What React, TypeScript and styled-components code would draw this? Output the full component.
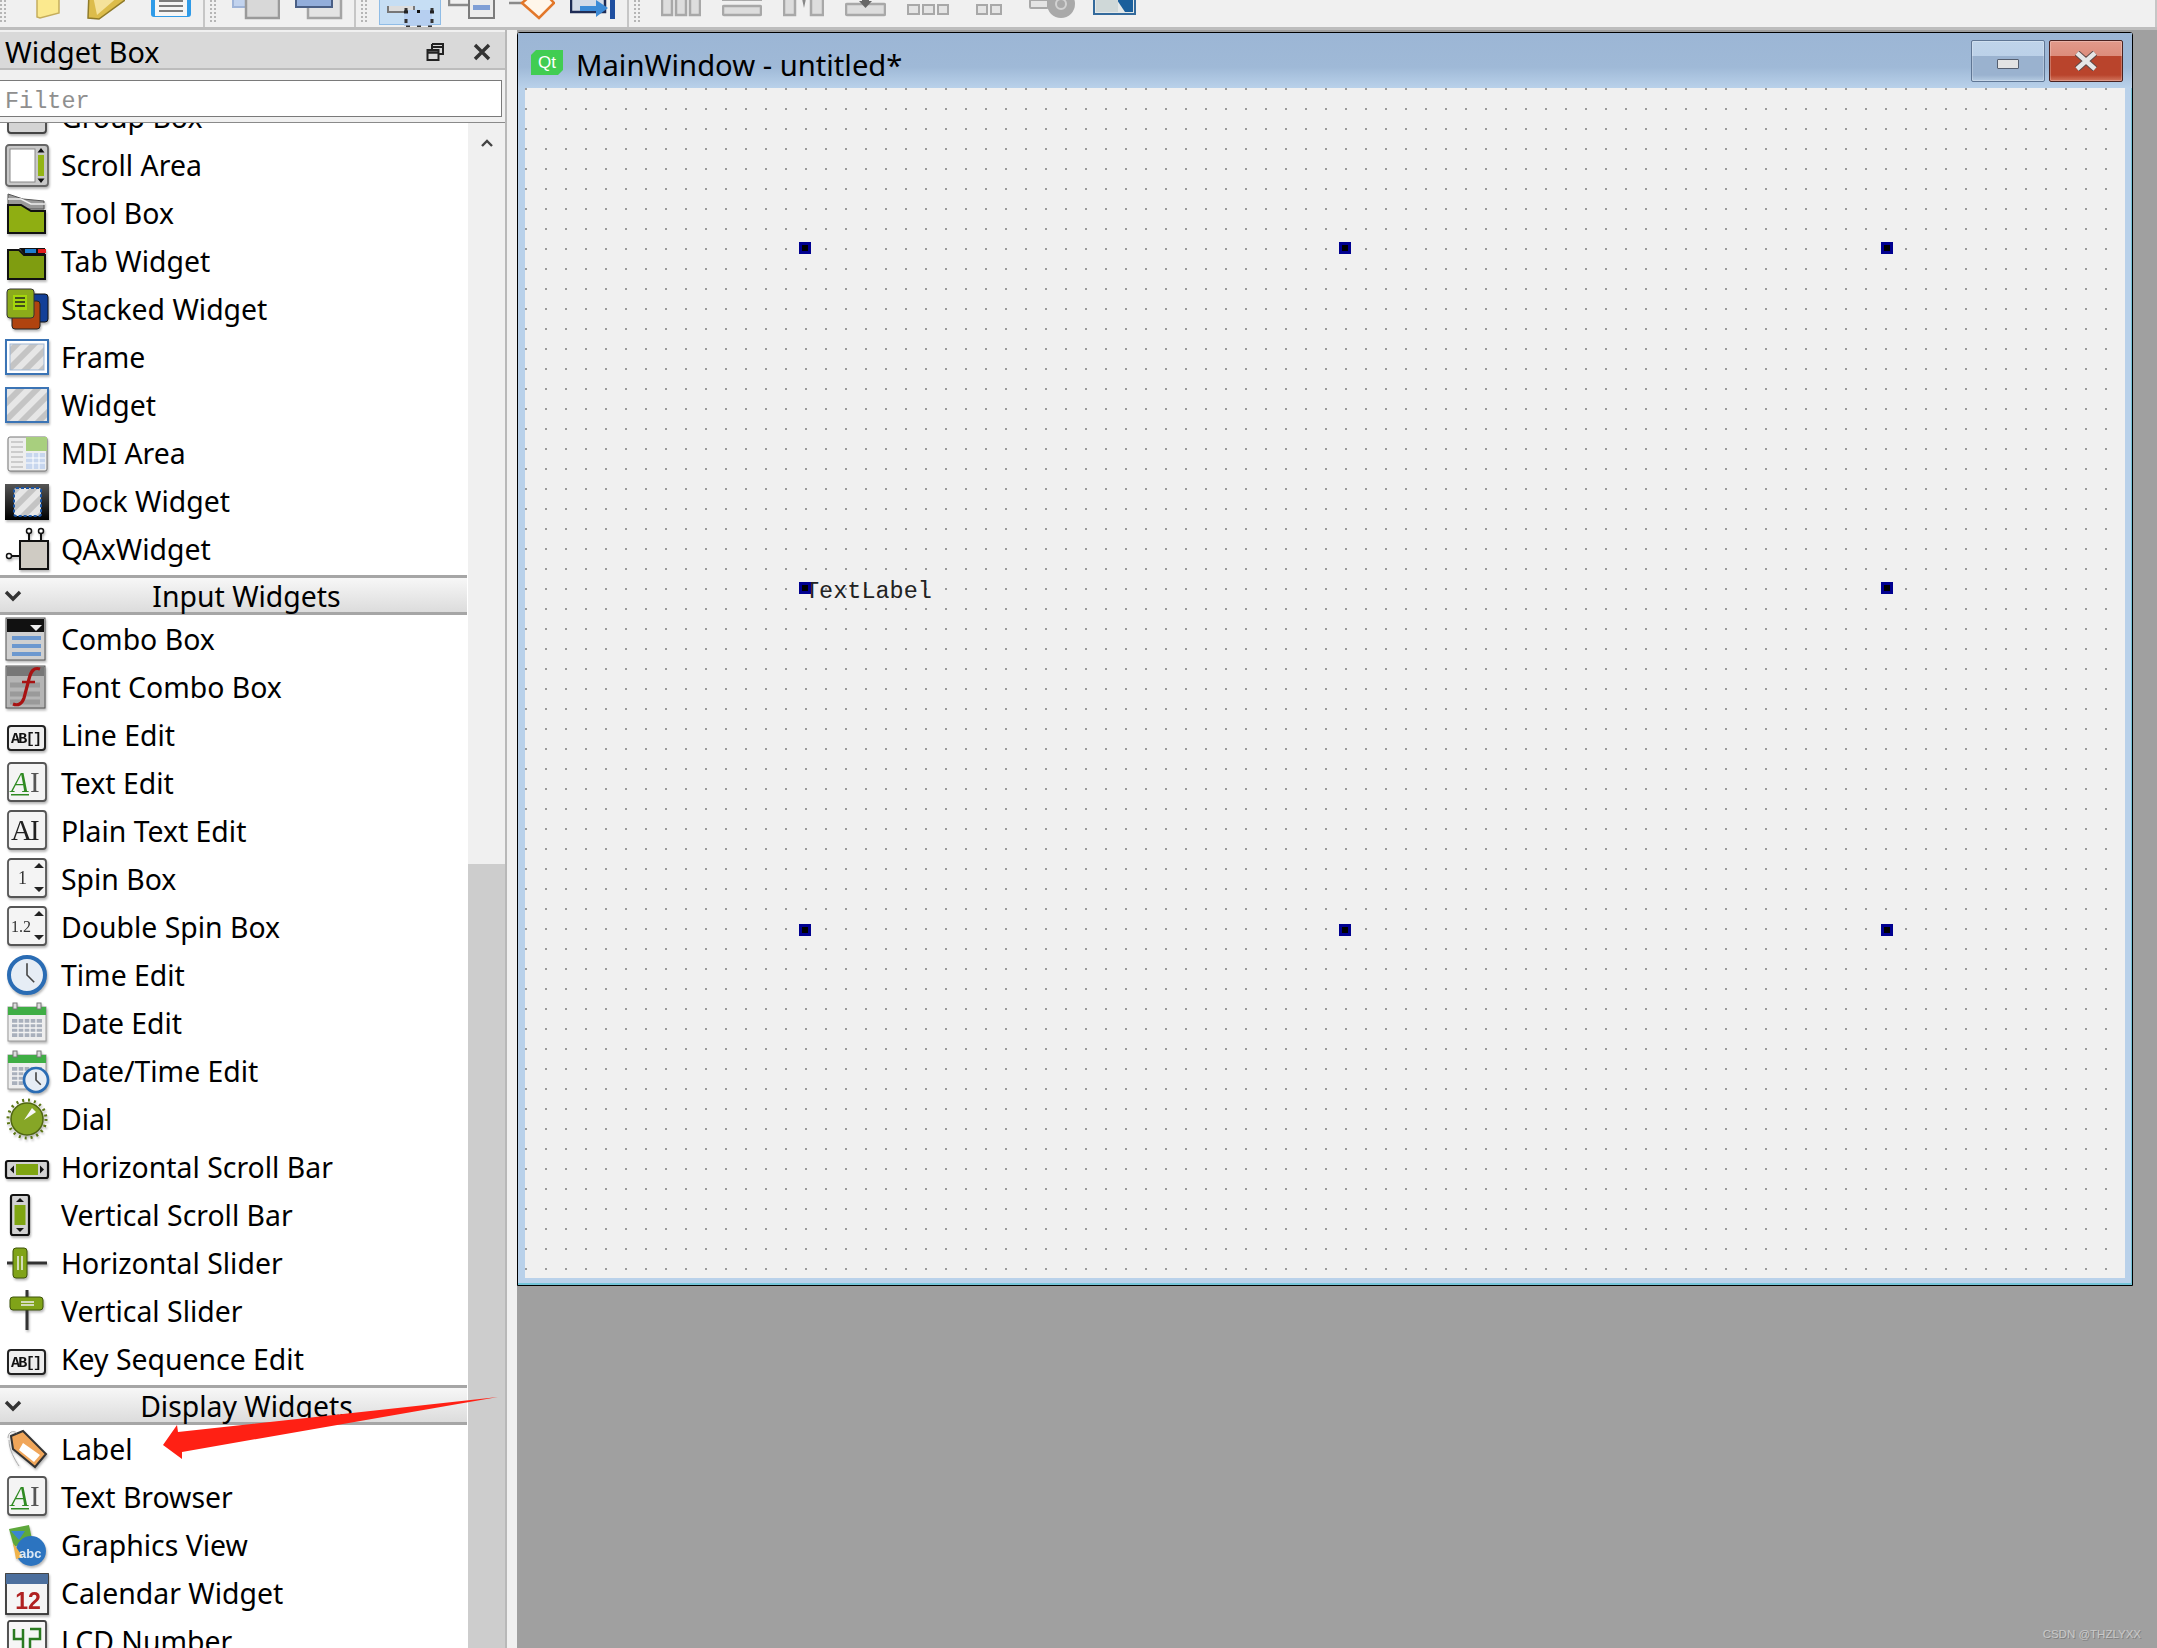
import React from 'react'
import styled, { createGlobalStyle } from 'styled-components'

const GlobalStyle = createGlobalStyle`
	html, body {
		margin: 0;
		padding: 0;
		background: #f0f0f0;
	}
	* {
		box-sizing: border-box;
	}
`

const Page = styled.div`
	position: relative;
	width: 2157px;
	height: 1648px;
	overflow: hidden;
	display: flex;
	flex-direction: column;
	background: #f0f0f0;
	color: #000;
	font-family: 'Noto Sans', 'Open Sans', sans-serif;
	font-size: 28.4px;
`

const Toolbar = styled.div`
	flex: none;
	height: 30px;
	display: flex;
	background: #f0f0f0;
	border-bottom: 3px solid #bdbdbd;
	overflow: hidden;
`

const ToolGroup = styled.div<{ $width: number }>`
	flex: none;
	width: ${({ $width }) => $width}px;
	height: 27px;
	display: flex;
	align-items: flex-start;
	border-right: 2px solid #c6c6c6;
`

const Grip = styled.span<{ $ml?: number }>`
	flex: none;
	width: 7px;
	height: 24px;
	margin-left: ${({ $ml }) => $ml ?? 0}px;
	background-image: conic-gradient(at 2px 2px, #0000 75%, #b5b5b5 0);
	background-size: 4px 4px;
`

const ToolSvg = styled.svg<{ $ml: number }>`
	flex: none;
	display: block;
	margin-left: ${({ $ml }) => $ml}px;
`

const ToolActive = styled.span<{ $ml: number }>`
	flex: none;
	display: block;
	width: 62px;
	height: 25px;
	margin-left: ${({ $ml }) => $ml}px;
	background: #c6def4;
	border: 1px solid #8fbce6;
	border-top: none;
`

const Body = styled.div`
	flex: 1;
	min-height: 0;
	display: flex;
`

const Dock = styled.aside`
	flex: none;
	width: 505px;
	display: flex;
	flex-direction: column;
	padding-top: 2px;
`

const DockTitle = styled.header`
	flex: none;
	height: 38px;
	display: flex;
	align-items: center;
	padding: 4px 14px 0 5px;
	background: #d9d9d9;
	border-bottom: 2px solid #bcbcbc;
	line-height: 1;
`

const DockName = styled.span`
	flex: 1;
	font-size: 28.8px;
`

const DockButton = styled.svg<{ $ml?: number }>`
	flex: none;
	margin-left: ${({ $ml }) => $ml ?? 0}px;
`

const FilterRow = styled.div`
	flex: none;
	padding: 10px 3px 5px 0;
`

const FilterInput = styled.input`
	display: block;
	width: 100%;
	height: 37px;
	padding: 5px 0 0 5px;
	background: #fff;
	border: 1px solid #7a7a7a;
	border-left: none;
	outline: none;
	font-family: 'Liberation Mono', monospace;
	font-size: 23.5px;
	&::placeholder {
		color: #8f8f8f;
		opacity: 1;
	}
`

const ListFrame = styled.div`
	flex: 1;
	min-height: 0;
	display: flex;
	overflow: hidden;
	border-top: 1px solid #8a8a8a;
`

const ListBody = styled.div`
	flex: none;
	width: 468px;
	height: 100%;
	overflow: hidden;
	background: #fff;
`

const ListContent = styled.div`
	margin-top: -30px;
`

const Row = styled.div`
	height: 48px;
	display: flex;
	align-items: center;
	padding-left: 5px;
	white-space: nowrap;
`

const RowIcon = styled.svg`
	flex: none;
	display: block;
	margin-right: 12px;
	overflow: visible;
	filter: drop-shadow(1px 2px 1px rgba(0, 0, 0, 0.28));
`

const Category = styled.div<{ $mt: number }>`
	height: 40px;
	margin: ${({ $mt }) => $mt}px 1px 0 0;
	padding-top: 2px;
	display: flex;
	align-items: center;
	background: linear-gradient(#f7f7f7, #dcdcdc);
	border-top: 3px solid #a6a6a6;
	border-bottom: 3px solid #a6a6a6;
`

const CategoryArrow = styled.svg`
	flex: none;
	width: 26px;
	padding-left: 4px;
`

const CategoryName = styled.span`
	flex: 1;
	text-align: center;
`

const Scrollbar = styled.div`
	flex: none;
	width: 37px;
	display: flex;
	flex-direction: column;
	background: #f0f0f0;
`

const ScrollArrow = styled.svg`
	flex: none;
	display: block;
	margin: 16px auto 0;
`

const ScrollThumb = styled.div`
	margin-top: auto;
	height: 784px;
	background: #cdcdcd;
`

const Splitter = styled.div`
	flex: none;
	width: 12px;
	background: #f0f0f0;
	border-left: 2px solid #b8b8b8;
`

const MdiArea = styled.main`
	flex: 1;
	min-width: 0;
	padding: 2px 0 0;
	background: #a0a0a0;
`

const SubWindow = styled.section`
	width: 1616px;
	height: 1254px;
	display: flex;
	flex-direction: column;
	background: #b9d1ea;
	border: 1px solid #000;
	border-radius: 3px 3px 0 0;
	box-shadow: inset -1px -2px 0 #74c4d8;
`

const TitleBar = styled.header`
	flex: none;
	height: 55px;
	display: flex;
	align-items: flex-start;
	padding: 7px 9px 0 13px;
	background: linear-gradient(#9cb6d5 0%, #9fb9d7 62%, #b9d1ea 100%);
`

const QtLogo = styled.svg`
	flex: none;
	margin-top: 10px;
`

const TitleText = styled.span`
	flex: 1;
	margin-left: 13px;
	font-size: 29.2px;
	line-height: 40px;
	padding-top: 5px;
`

const WindowButton = styled.span<{ $close?: boolean }>`
	flex: none;
	width: 74px;
	height: 42px;
	margin-left: 4px;
	display: grid;
	place-items: center;
	border-radius: 2px;
	border: 1px solid ${({ $close }) => ($close ? '#4a2220' : '#5f7694')};
	box-shadow: inset 0 0 0 1px rgba(255, 255, 255, 0.25);
	background: ${({ $close }) =>
		$close
			? 'linear-gradient(#e29a8b 0, #dc8c7b 38%, #b9442c 38%, #b9442c 85%, #d2765f 100%)'
			: 'linear-gradient(#bfd4ea 0, #bcd1e8 38%, #9ab2cf 38%, #9ab2cf 85%, #b6cce3 100%)'};
`

const MinGlyph = styled.span`
	display: block;
	width: 22px;
	height: 10px;
	margin-top: 6px;
	background: #e3e3e3;
	border: 1px solid #555f70;
	border-radius: 1px;
`

const FormCanvas = styled.div`
	position: relative;
	flex: none;
	width: 1600px;
	height: 1190px;
	margin-left: 7px;
	background-color: #f0f0f0;
	background-image: conic-gradient(at 2px 2px, #0000 75%, #9b9b9b 0);
	background-size: 20px 20px;
`

const TextLabel = styled.span`
	position: absolute;
	left: 280px;
	top: 490px;
	font-family: 'Liberation Mono', monospace;
	font-size: 23.5px;
	line-height: 28px;
	color: #222;
`

const Handle = styled.span<{ $x: number; $y: number }>`
	position: absolute;
	left: ${({ $x }) => $x}px;
	top: ${({ $y }) => $y}px;
	width: 12px;
	height: 12px;
	background: #000;
	border: 3px solid #000090;
`

const Watermark = styled.span`
	position: absolute;
	right: 16px;
	bottom: 8px;
	font-family: 'Liberation Sans', sans-serif;
	font-size: 11.5px;
	color: #c9c9c9;
	text-shadow: 1px 1px 0 #808080;
`

const ArrowMark = styled.svg`
	position: absolute;
	left: 0;
	top: 0;
	pointer-events: none;
`

const handles = [
	[274, 154],
	[814, 154],
	[1356, 154],
	[274, 494],
	[1356, 494],
	[274, 836],
	[814, 836],
	[1356, 836],
]

// small widget box pictures, all on a 44x44 box
const Hatch = ({ id }: { id: string }) => (
	<pattern id={id} width="12" height="12" patternUnits="userSpaceOnUse" patternTransform="rotate(45)">
		<rect width="12" height="12" fill="#e6e6e6" />
		<rect width="6" height="12" fill="#c4c4c4" />
	</pattern>
)

const AiIcon = ({ color }: { color: string }) => (
	<>
		<rect x="3" y="2" width="38" height="38" rx="3" fill="#f4f4f4" stroke="#555" strokeWidth="1.8" />
		<text x="6" y="31" fontFamily="Liberation Serif" fontStyle={color === '#222' ? 'normal' : 'italic'} fontSize="29" fill={color}>
			A
		</text>
		<text x="25" y="31" fontFamily="Liberation Serif" fontSize="29" fill={color === '#222' ? '#222' : '#555'}>
			I
		</text>
		{color !== '#222' && <rect x="6" y="33" width="18" height="1.5" fill={color} />}
	</>
)

const AbIcon = () => (
	<>
		<rect x="3" y="13" width="37" height="24" rx="3" fill="#eee" stroke="#222" strokeWidth="2" />
		<text x="6" y="30" fontFamily="Liberation Mono" fontWeight="700" fontSize="15" fill="#111" textLength="31">
			AB[]
		</text>
	</>
)

const SpinIcon = ({ label }: { label: string }) => (
	<>
		<rect x="3" y="2" width="38" height="38" rx="3" fill="#f4f4f4" stroke="#555" strokeWidth="1.8" />
		<text x={label.length > 1 ? 6 : 13} y="27" fontFamily="Liberation Serif" fontSize={label.length > 1 ? 16 : 18} fill="#333">
			{label}
		</text>
		<path d="M29 11l5-5 5 5zM29 30h10l-5 5z" fill="#222" />
	</>
)

const Clock = ({ cx, cy, r }: { cx: number; cy: number; r: number }) => (
	<>
		<circle cx={cx} cy={cy} r={r} fill="#e6edf5" stroke="#2a6cb4" strokeWidth={r / 4.5} />
		<path d={`M${cx} ${cy - r * 0.65}V${cy}L${cx + r * 0.4} ${cy + r * 0.4}`} fill="none" stroke="#444" strokeWidth="1.6" />
	</>
)

const CalendarBase = () => (
	<>
		<rect x="3" y="6" width="38" height="34" fill="#eee" stroke="#999" />
		<rect x="3" y="6" width="38" height="8" fill="#3fae45" />
		<rect x="8" y="2" width="4" height="6" fill="#ddd" stroke="#777" />
		<rect x="32" y="2" width="4" height="6" fill="#ddd" stroke="#777" />
		<path d="M7 18h30v18H7z" fill="#a9b0bc" />
		<path d="M7 22.5h30M7 27h30M7 31.5h30M13 18v18M19 18v18M25 18v18M31 18v18" stroke="#f3f3f3" strokeWidth="1.3" />
	</>
)

const icons: Record<string, React.ReactNode> = {
	'Group Box': <rect x="3" y="8" width="38" height="30" rx="3" fill="#d4d4d4" stroke="#444" strokeWidth="1.8" />,
	'Scroll Area': (
		<>
			<rect x="1" y="2" width="42" height="41" rx="3" fill="#c8c8c8" stroke="#666" strokeWidth="1.8" />
			<rect x="5" y="6" width="25" height="33" fill="#fff" stroke="#888" />
			<rect x="33" y="12" width="6" height="21" fill="#93b414" />
			<path d="M36 5l3.5 4.5h-7zM36 40l3.5-4.5h-7z" fill="#111" />
		</>
	),
	'Tool Box': (
		<>
			<path d="M3 3l15 5 21 2v8H3z" fill="#9a9a9a" stroke="#555" />
			<path d="M3 8h13l10 5h14" stroke="#eee" fill="none" strokeWidth="1.5" />
			<path d="M3 14h13l10 6h14v22H3z" fill="#8fae12" stroke="#111" strokeWidth="2" />
		</>
	),
	'Tab Widget': (
		<>
			<path d="M3 11h11l5 5h21v24H3z" fill="#7f9d10" stroke="#111" strokeWidth="2" />
			<path d="M14 9h26v6H19z" fill="#111" />
			<rect x="20" y="10" width="11" height="4" fill="#1f7fd0" />
			<rect x="33" y="10" width="8" height="4" fill="#e21d1d" />
		</>
	),
	'Stacked Widget': (
		<>
			<rect x="20" y="7" width="23" height="28" rx="3" fill="#123f98" stroke="#111" />
			<rect x="7" y="14" width="28" height="28" rx="3" fill="#b0430f" stroke="#222" />
			<rect x="2" y="2" width="27" height="29" rx="3" fill="#8cab1a" stroke="#333" />
			<rect x="8" y="8" width="14" height="15" fill="#a4d60c" />
			<path d="M10 11h10M10 15h10M10 19h10" stroke="#222" strokeWidth="1.5" />
		</>
	),
	Frame: (
		<>
			<defs>
				<Hatch id="hatch-frame" />
			</defs>
			<rect x="1" y="5" width="42" height="34" fill="#fff" stroke="#3b74b5" strokeWidth="2" />
			<rect x="5" y="9" width="34" height="26" fill="url(#hatch-frame)" stroke="#9fb8d6" />
		</>
	),
	Widget: (
		<>
			<defs>
				<Hatch id="hatch-widget" />
			</defs>
			<rect x="1" y="5" width="42" height="34" fill="url(#hatch-widget)" stroke="#3b74b5" strokeWidth="2" />
		</>
	),
	'MDI Area': (
		<>
			<rect x="3" y="6" width="39" height="34" rx="2" fill="#eee" stroke="#777" />
			<rect x="21" y="6" width="21" height="14" fill="#a8cf7e" />
			<path d="M6 11h12M6 16h12M6 21h12M6 26h12M6 31h12M6 36h12" stroke="#aaa" />
			<rect x="21" y="22" width="19" height="16" fill="#c7d6ee" />
			<path d="M21 27h19M21 32h19M28 22v16M34 22v16" stroke="#fff" />
		</>
	),
	'Dock Widget': (
		<>
			<defs>
				<Hatch id="hatch-dock" />
				<linearGradient id="dock-fade" x1="0" y1="0" x2="0" y2="1">
					<stop offset="0" stopColor="#555" />
					<stop offset="1" stopColor="#000" />
				</linearGradient>
			</defs>
			<rect x="0" y="5" width="44" height="36" fill="url(#dock-fade)" />
			<rect x="9" y="9" width="27" height="28" rx="2" fill="url(#hatch-dock)" stroke="#1e57a4" strokeWidth="2" strokeDasharray="3 2" />
		</>
	),
	QAxWidget: (
		<>
			<rect x="15" y="14" width="28" height="28" fill="#cfcbc3" stroke="#111" strokeWidth="2" />
			<path d="M1 29h14M24 5v9M36 5v9" stroke="#111" strokeWidth="2" />
			<circle cx="24" cy="4" r="2.5" fill="#fff" stroke="#111" strokeWidth="1.5" />
			<circle cx="36" cy="4" r="2.5" fill="#fff" stroke="#111" strokeWidth="1.5" />
			<circle cx="4" cy="29" r="2.5" fill="#fff" stroke="#111" strokeWidth="1.5" />
		</>
	),
	'Combo Box': (
		<>
			<rect x="1" y="1" width="39" height="42" fill="#d0d0d0" stroke="#555" />
			<rect x="2" y="2" width="37" height="13" fill="#111" />
			<path d="M25 8h12l-6 6z" fill="#eee" />
			<path d="M7 21h29M7 29h29M7 37h29" stroke="#6c98cf" strokeWidth="4" />
		</>
	),
	'Font Combo Box': (
		<>
			<rect x="1" y="1" width="39" height="42" fill="#b5b5b5" stroke="#555" />
			<rect x="2" y="2" width="37" height="9" fill="#777" />
			<path d="M5 20h30M5 29h30M5 37h30" stroke="#9a9a9a" strokeWidth="5" />
			<path d="M35 4c-6-2-9 2-11 10l-5 19c-2 6-6 8-11 6" fill="none" stroke="#a81212" strokeWidth="3.2" />
			<path d="M17 17h13" stroke="#a81212" strokeWidth="2.5" />
		</>
	),
	'Line Edit': <AbIcon />,
	'Text Edit': <AiIcon color="#2f8a22" />,
	'Plain Text Edit': <AiIcon color="#222" />,
	'Spin Box': <SpinIcon label="1" />,
	'Double Spin Box': <SpinIcon label="1.2" />,
	'Time Edit': <Clock cx={22} cy={22} r={18} />,
	'Date Edit': <CalendarBase />,
	'Date/Time Edit': (
		<>
			<CalendarBase />
			<Clock cx={31} cy={31} r={12} />
		</>
	),
	Dial: (
		<>
			<circle cx="22" cy="22" r="19" fill="none" stroke="#5c7614" strokeWidth="3" strokeDasharray="2 4" />
			<circle cx="22" cy="22" r="16" fill="#86a626" stroke="#4f6610" strokeWidth="1.5" />
			<path d="M27 11l4 4-12 8z" fill="#f7f7f7" />
		</>
	),
	'Horizontal Scroll Bar': (
		<>
			<rect x="1" y="16" width="42" height="17" rx="2" fill="#d2d2d2" stroke="#111" strokeWidth="2.2" />
			<rect x="11" y="19" width="22" height="11" fill="#7fa512" />
			<path d="M5 24.5l4-4v8zM39 24.5l-4-4v8z" fill="#111" />
		</>
	),
	'Vertical Scroll Bar': (
		<>
			<rect x="6" y="2" width="18" height="40" rx="2" fill="#d2d2d2" stroke="#111" strokeWidth="2.2" />
			<rect x="9.5" y="12" width="11" height="20" fill="#7fa512" />
			<path d="M15 5l4 4h-8zM15 39l4-4h-8z" fill="#111" />
		</>
	),
	'Horizontal Slider': (
		<>
			<path d="M2 22h40" stroke="#333" strokeWidth="3" />
			<rect x="8" y="7" width="14" height="30" rx="3" fill="#80a318" stroke="#3f540a" />
			<path d="M13 15v14M17 15v14" stroke="#eee" strokeWidth="1.5" />
		</>
	),
	'Vertical Slider': (
		<>
			<path d="M22 1v40" stroke="#333" strokeWidth="3" />
			<rect x="5" y="8" width="33" height="13" rx="3" fill="#80a318" stroke="#3f540a" />
			<path d="M16 13h13M16 16h13" stroke="#eee" strokeWidth="1.5" />
		</>
	),
	'Key Sequence Edit': <AbIcon />,
	Label: (
		<>
			<path d="M6 9l12-5 23 23-11 13L8 22z" fill="#f0a65a" stroke="#333" strokeWidth="2" />
			<path d="M18 16l17 12-6 7-15-12z" fill="#fff" />
			<path d="M3 11C3 5 8 3 12 6M4 13c0 10 6 20 10 26" fill="none" stroke="#aaa" />
		</>
	),
	'Text Browser': <AiIcon color="#2f8a22" />,
	'Graphics View': (
		<>
			<path d="M4 6l20-4 3 14-18 8z" fill="#5ea83c" />
			<path d="M6 8h14l-6 9z" fill="#3a86d0" />
			<circle cx="26" cy="28" r="15" fill="#2c74c0" />
			<path d="M8 20l10 14-7 2z" fill="#f0b34a" />
			<text x="14" y="35" fontFamily="Liberation Sans" fontSize="13" fontWeight="700" fill="#dbe8f5">
				abc
			</text>
		</>
	),
	'Calendar Widget': (
		<>
			<rect x="1" y="3" width="42" height="40" fill="#f5f5f5" stroke="#333" strokeWidth="1.8" />
			<rect x="1" y="3" width="42" height="10" fill="#4c6f9d" />
			<text x="23" y="38" textAnchor="middle" fontFamily="Liberation Sans" fontWeight="700" fontSize="23" fill="#b02020">
				12
			</text>
		</>
	),
	'LCD Number': (
		<>
			<rect x="3" y="2" width="38" height="38" rx="2" fill="#f6f6f6" stroke="#444" strokeWidth="1.8" />
			<path d="M9 10v10h9M18 10v22M25 10h10v10H25v12h10" fill="none" stroke="#2a7a20" strokeWidth="2.5" />
		</>
	),
}

const containers = [
	'Group Box',
	'Scroll Area',
	'Tool Box',
	'Tab Widget',
	'Stacked Widget',
	'Frame',
	'Widget',
	'MDI Area',
	'Dock Widget',
	'QAxWidget',
]
const inputs = [
	'Combo Box',
	'Font Combo Box',
	'Line Edit',
	'Text Edit',
	'Plain Text Edit',
	'Spin Box',
	'Double Spin Box',
	'Time Edit',
	'Date Edit',
	'Date/Time Edit',
	'Dial',
	'Horizontal Scroll Bar',
	'Vertical Scroll Bar',
	'Horizontal Slider',
	'Vertical Slider',
	'Key Sequence Edit',
]
const displays = ['Label', 'Text Browser', 'Graphics View', 'Calendar Widget', 'LCD Number']

const Items = ({ names }: { names: string[] }) => (
	<>
		{names.map((name) => (
			<Row key={name}>
				<RowIcon width="44" height="44" viewBox="0 0 44 44">
					{icons[name]}
				</RowIcon>
				{name}
			</Row>
		))}
	</>
)

const Chevron = () => (
	<CategoryArrow height="14" viewBox="0 0 22 14">
		<path d="M2 3l7 7 7-7" fill="none" stroke="#333" strokeWidth="3.4" />
	</CategoryArrow>
)

const ToolIcon = ({ w, ml, children }: { w: number; ml: number; children: React.ReactNode }) => (
	<ToolSvg $ml={ml} width={w} height="26" viewBox={`0 0 ${w} 26`}>
		{children}
	</ToolSvg>
)

export default function App() {
	return (
		<Page>
			<GlobalStyle />
			<Toolbar>
				<ToolGroup $width={205}>
					<Grip />
					<ToolIcon w={24} ml={29}>
						<path d="M1 -8H23V13L4 18 1 17z" fill="#fbe98e" stroke="#c5ad5c" strokeWidth="1.5" />
					</ToolIcon>
					<ToolIcon w={40} ml={25}>
						<path d="M4 -8H40V0L14 19 3 18z" fill="#dcbc4a" stroke="#8f7a28" strokeWidth="1.5" />
						<path d="M8 -4H34L12 15z" fill="#f5e29a" />
					</ToolIcon>
					<ToolIcon w={42} ml={25}>
						<rect x="1" y="-10" width="40" height="27" rx="3" fill="#2f9be8" />
						<rect x="5" y="-10" width="32" height="26" fill="#f6f6f6" />
						<path d="M9 1h24M9 6h24M9 11h24" stroke="#555" strokeWidth="1.5" />
					</ToolIcon>
				</ToolGroup>
				<ToolGroup $width={151}>
					<Grip $ml={5} />
					<ToolIcon w={48} ml={15}>
						<rect x="1" y="-12" width="20" height="19" fill="#c2d3ee" stroke="#9fb4d8" strokeWidth="2" />
						<rect x="14" y="-12" width="33" height="30" fill="#d8d8d8" stroke="#9a9a9a" strokeWidth="2.5" />
					</ToolIcon>
					<ToolIcon w={48} ml={15}>
						<rect x="13" y="-12" width="33" height="30" fill="#e4e4e4" stroke="#a4a4a4" strokeWidth="2.5" />
						<rect x="1" y="-12" width="36" height="19" fill="#93aedb" stroke="#4a5f85" strokeWidth="2" />
					</ToolIcon>
				</ToolGroup>
				<ToolGroup $width={273}>
					<Grip $ml={5} />
					<ToolActive $ml={11}>
						<svg width="60" height="24" viewBox="0 0 60 24">
							<rect x="8" y="-12" width="26" height="18" fill="#ddd" stroke="#777" strokeWidth="2" />
							<rect x="24" y="4" width="28" height="16" fill="#b6cff0" />
							<path d="M26 2v20M52 2v20M26 21h26" stroke="#333" strokeWidth="3" strokeDasharray="4 7" />
							<rect x="37" y="4" width="3" height="3" fill="#111" />
							<path d="M24 6h4M50 6h4" stroke="#222" strokeWidth="3" />
						</svg>
					</ToolActive>
					<ToolIcon w={47} ml={7}>
						<path d="M1 -4V5H20" fill="none" stroke="#8a8a8a" strokeWidth="2.5" />
						<rect x="21" y="-6" width="25" height="24" fill="#ececec" stroke="#7c7c7c" strokeWidth="2" />
						<rect x="25" y="5" width="17" height="5" fill="#7f9fd6" />
					</ToolIcon>
					<ToolIcon w={47} ml={13}>
						<path d="M1 3H14" stroke="#8a8a8a" strokeWidth="2.5" />
						<path d="M14 3L27 -8H36L46 3 31 18z" fill="#fff6ea" stroke="#e2772a" strokeWidth="2.5" />
					</ToolIcon>
					<ToolIcon w={47} ml={15}>
						<rect x="1" y="-8" width="34" height="20" fill="#d4dbe8" stroke="#1f2c55" strokeWidth="2.5" />
						<path d="M10 6H26V0L38 8 26 17V11H10z" fill="#3c8ad6" />
						<rect x="40" y="-8" width="5" height="27" fill="#1f4fa0" />
					</ToolIcon>
				</ToolGroup>
				<ToolGroup $width={1528}>
					<Grip $ml={5} />
					<ToolIcon w={40} ml={20}>
						<rect x="1" y="-10" width="10" height="25" fill="#ddd" stroke="#a8a8a8" strokeWidth="2.5" />
						<rect x="15" y="-10" width="10" height="25" fill="#ddd" stroke="#a8a8a8" strokeWidth="2.5" />
						<rect x="29" y="-10" width="10" height="25" fill="#ddd" stroke="#a8a8a8" strokeWidth="2.5" />
					</ToolIcon>
					<ToolIcon w={40} ml={21}>
						<rect x="1" y="-8" width="38" height="8" fill="#ddd" stroke="#a8a8a8" strokeWidth="2" />
						<rect x="1" y="6" width="38" height="9" rx="1" fill="#ddd" stroke="#a8a8a8" strokeWidth="2.5" />
					</ToolIcon>
					<ToolIcon w={41} ml={21}>
						<rect x="1" y="-10" width="11" height="25" fill="#ddd" stroke="#a8a8a8" strokeWidth="2.5" />
						<path d="M18 -6L21 8 24 -6z" fill="#888" />
						<rect x="28" y="-10" width="12" height="25" fill="#ddd" stroke="#a8a8a8" strokeWidth="2.5" />
					</ToolIcon>
					<ToolIcon w={41} ml={21}>
						<rect x="1" y="4" width="39" height="11" rx="1" fill="#ddd" stroke="#a8a8a8" strokeWidth="2.5" />
						<path d="M14 1h13L20.5 8z" fill="#666" />
						<rect x="17" y="-8" width="7" height="9" fill="#666" />
					</ToolIcon>
					<ToolIcon w={42} ml={21}>
						<rect x="1" y="-8" width="11" height="6" fill="#ddd" stroke="#a8a8a8" strokeWidth="1.5" />
						<rect x="16" y="-8" width="11" height="6" fill="#ddd" stroke="#a8a8a8" strokeWidth="1.5" />
						<rect x="31" y="-8" width="10" height="6" fill="#ddd" stroke="#a8a8a8" strokeWidth="1.5" />
						<rect x="1" y="5" width="11" height="9" fill="#e4e4e4" stroke="#a8a8a8" strokeWidth="2" />
						<rect x="16" y="5" width="11" height="9" fill="#e4e4e4" stroke="#a8a8a8" strokeWidth="2" />
						<rect x="31" y="5" width="10" height="9" fill="#e4e4e4" stroke="#a8a8a8" strokeWidth="2" />
					</ToolIcon>
					<ToolIcon w={26} ml={27}>
						<rect x="1" y="-8" width="10" height="6" fill="#ddd" stroke="#a8a8a8" strokeWidth="1.5" />
						<rect x="15" y="-8" width="10" height="6" fill="#ddd" stroke="#a8a8a8" strokeWidth="1.5" />
						<rect x="1" y="5" width="10" height="9" fill="#e4e4e4" stroke="#a8a8a8" strokeWidth="2" />
						<rect x="15" y="5" width="10" height="9" fill="#e4e4e4" stroke="#a8a8a8" strokeWidth="2" />
					</ToolIcon>
					<ToolIcon w={46} ml={27}>
						<rect x="1" y="0" width="18" height="8" rx="1" fill="#e4e4e4" stroke="#a8a8a8" strokeWidth="2" />
						<circle cx="32" cy="4" r="14" fill="#a9a9a9" />
						<circle cx="32" cy="4" r="5" fill="none" stroke="#d2d2d2" strokeWidth="2" />
					</ToolIcon>
					<ToolIcon w={43} ml={18}>
						<rect x="1" y="-8" width="41" height="22" fill="#e4e8e8" stroke="#336a9c" strokeWidth="2" />
						<path d="M24 0h16v12H32z" fill="#1a5f9c" />
						<rect x="3" y="0" width="22" height="12" fill="#cfd8d8" />
					</ToolIcon>
				</ToolGroup>
			</Toolbar>
			<Body>
				<Dock>
					<DockTitle>
						<DockName>Widget Box</DockName>
						<DockButton width="19" height="20" viewBox="0 0 19 20">
							<path d="M6 2h11v10H13M6 2v5M6 5h11" fill="none" stroke="#222" strokeWidth="2" />
							<rect x="1.5" y="8" width="11" height="10" fill="none" stroke="#222" strokeWidth="2" />
							<path d="M1 10.5h12" stroke="#222" strokeWidth="2.5" />
						</DockButton>
						<DockButton $ml={28} width="18" height="18" viewBox="0 0 18 18">
							<path d="M2 2l14 14M16 2L2 16" fill="none" stroke="#333" strokeWidth="3.4" />
						</DockButton>
					</DockTitle>
					<FilterRow>
						<FilterInput placeholder="Filter" readOnly />
					</FilterRow>
					<ListFrame>
						<ListBody>
							<ListContent>
								<Items names={containers} />
								<Category $mt={2}>
									<Chevron />
									<CategoryName>Input Widgets</CategoryName>
								</Category>
								<Items names={inputs} />
								<Category $mt={2}>
									<Chevron />
									<CategoryName>Display Widgets</CategoryName>
								</Category>
								<Items names={displays} />
							</ListContent>
						</ListBody>
						<Scrollbar>
							<ScrollArrow width="12" height="8" viewBox="0 0 12 8">
								<path d="M1 7l5-5 5 5" fill="none" stroke="#444" strokeWidth="2.4" />
							</ScrollArrow>
							<ScrollThumb />
						</Scrollbar>
					</ListFrame>
				</Dock>
				<Splitter />
				<MdiArea>
					<SubWindow>
						<TitleBar>
							<QtLogo width="32" height="25" viewBox="0 0 32 25">
								<path d="M5 0H32V20L27 25H0V5z" fill="#41cd52" />
								<text x="16" y="18" textAnchor="middle" fontFamily="Liberation Sans" fontSize="17" fill="#fff">
									Qt
								</text>
							</QtLogo>
							<TitleText>MainWindow - untitled*</TitleText>
							<WindowButton>
								<MinGlyph />
							</WindowButton>
							<WindowButton $close>
								<svg width="24" height="20" viewBox="0 0 24 20">
									<path d="M3 2l18 16M21 2L3 18" fill="none" stroke="#5c4a48" strokeWidth="6.5" />
									<path d="M3 2l18 16M21 2L3 18" fill="none" stroke="#e6e6e6" strokeWidth="4.5" />
								</svg>
							</WindowButton>
						</TitleBar>
						<FormCanvas>
							<TextLabel>TextLabel</TextLabel>
							{handles.map(([x, y]) => (
								<Handle key={`${x}-${y}`} $x={x} $y={y} />
							))}
						</FormCanvas>
					</SubWindow>
				</MdiArea>
			</Body>
			<Watermark>CSDN @THZLYXX</Watermark>
			<ArrowMark width="2157" height="1648" viewBox="0 0 2157 1648">
				<path d="M498 1397L178 1432 177 1425 163 1445 182 1459 182 1452z" fill="#ff2014" />
			</ArrowMark>
		</Page>
	)
}
